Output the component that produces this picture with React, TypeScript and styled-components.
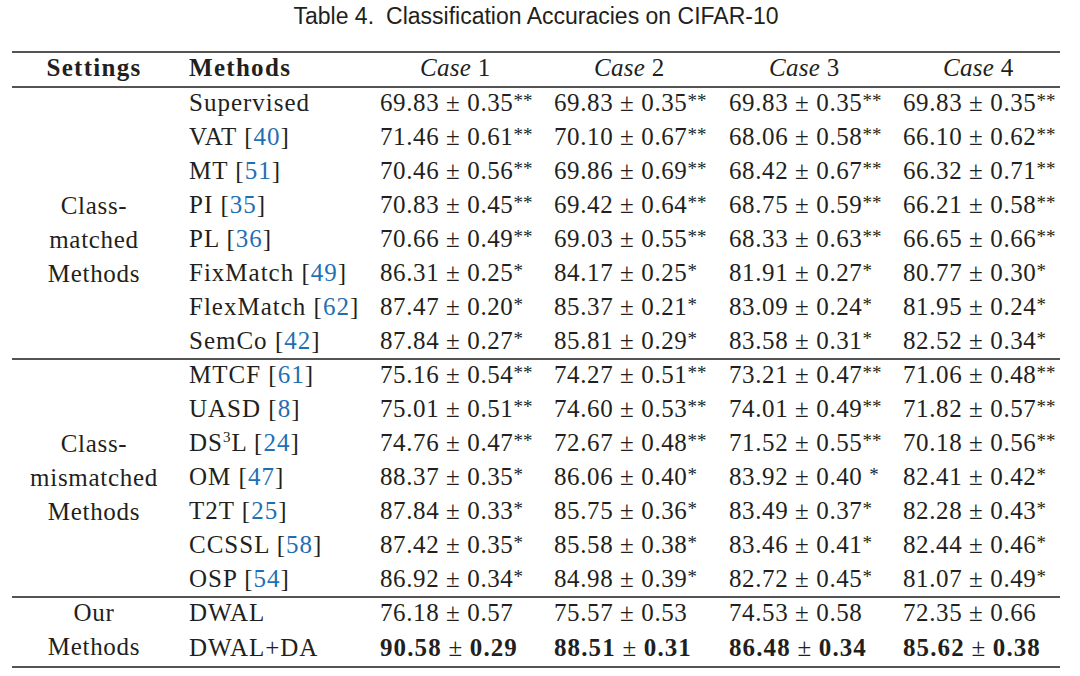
import React from 'react'
import styled, { createGlobalStyle } from 'styled-components'

const GlobalStyle = createGlobalStyle`
  html, body {
    margin: 0;
    padding: 0;
    background: #ffffff;
  }
  body {
    color: #231f20;
    font-family: "Liberation Serif", "Times New Roman", serif;
  }
`

const Page = styled.div`
  width: 1048px;
  padding: 0 20px 0 12px;
`

const Caption = styled.div`
  height: 51px;
  padding-top: 4px;
  box-sizing: border-box;
  text-align: center;
  font-family: "Liberation Sans", Arial, sans-serif;
  font-size: 23px;
  line-height: 24px;
  color: #231f20;

  span {
    margin-right: 12px;
  }
`

const Table = styled.table`
  width: 1048px;
  border-spacing: 0;
  table-layout: fixed;
  font-size: 25px;
  border-bottom: 2px solid #545454;
`

const HeadCell = styled.th<{ $align?: 'center' | 'left'; $pad?: number }>`
  height: 35px;
  padding: 0 0 0 ${p => p.$pad ?? 0}px;
  text-align: ${p => p.$align ?? 'left'};
  font-weight: normal;
  line-height: 33px;
  vertical-align: top;
  box-shadow: inset 0 2px 0 #545454;
  white-space: nowrap;
  letter-spacing: 0.3px;
`

const BoldHead = styled.strong`
  font-weight: bold;
  letter-spacing: 1.3px;
`

const Row = styled.tr<{ $rule?: boolean; $tall?: boolean }>`
  td {
    height: ${p => (p.$tall ? 35 : 34)}px;
    line-height: ${p => (p.$tall ? 34 : 33)}px;
    box-shadow: ${p => (p.$rule ? 'inset 0 2px 0 #545454' : 'none')};
  }
`

const SettingCell = styled.td<{ $skip: number }>`
  padding: ${p => p.$skip * 34 + (p.$skip ? 1 : 0)}px 0 0 0;
  text-align: center;
  vertical-align: top;
  letter-spacing: 0.7px;

  div {
    height: 34px;
    line-height: 33px;
  }
`

const MethodCell = styled.td`
  padding: 0 0 0 13px;
  vertical-align: top;
  white-space: nowrap;
  letter-spacing: 1px;
`

const ValueCell = styled.td`
  padding: 0 0 0 10px;
  vertical-align: top;
  white-space: nowrap;
  letter-spacing: 0.6px;
`

const Ref = styled.span`
  color: #1f6fb2;
`

const Stars = styled.sup`
  font-size: 19px;
  line-height: 0;
  vertical-align: 4px;
  letter-spacing: 0;
`

const Sup = styled.sup`
  font-size: 15px;
  line-height: 0;
  vertical-align: 9px;
`

const Bold = styled.b`
  font-weight: bold;
  letter-spacing: 1.1px;
`

type Val = [string, string, string?]

interface Method {
  name: React.ReactNode
  cite?: string
  vals: Val[]
  bold?: boolean
}

interface Group {
  label: string[]
  skip: number
  rows: Method[]
}

const s2 = (a: string, b: string): Val => [a, b, '**']
const s1 = (a: string, b: string): Val => [a, b, '*']

const groups: Group[] = [
  {
    label: ['Class-', 'matched', 'Methods'],
    skip: 3,
    rows: [
      { name: 'Supervised', vals: [s2('69.83', '0.35'), s2('69.83', '0.35'), s2('69.83', '0.35'), s2('69.83', '0.35')] },
      { name: 'VAT', cite: '40', vals: [s2('71.46', '0.61'), s2('70.10', '0.67'), s2('68.06', '0.58'), s2('66.10', '0.62')] },
      { name: 'MT', cite: '51', vals: [s2('70.46', '0.56'), s2('69.86', '0.69'), s2('68.42', '0.67'), s2('66.32', '0.71')] },
      { name: 'PI', cite: '35', vals: [s2('70.83', '0.45'), s2('69.42', '0.64'), s2('68.75', '0.59'), s2('66.21', '0.58')] },
      { name: 'PL', cite: '36', vals: [s2('70.66', '0.49'), s2('69.03', '0.55'), s2('68.33', '0.63'), s2('66.65', '0.66')] },
      { name: 'FixMatch', cite: '49', vals: [s1('86.31', '0.25'), s1('84.17', '0.25'), s1('81.91', '0.27'), s1('80.77', '0.30')] },
      { name: 'FlexMatch', cite: '62', vals: [s1('87.47', '0.20'), s1('85.37', '0.21'), s1('83.09', '0.24'), s1('81.95', '0.24')] },
      { name: 'SemCo', cite: '42', vals: [s1('87.84', '0.27'), s1('85.81', '0.29'), s1('83.58', '0.31'), s1('82.52', '0.34')] },
    ],
  },
  {
    label: ['Class-', 'mismatched', 'Methods'],
    skip: 2,
    rows: [
      { name: 'MTCF', cite: '61', vals: [s2('75.16', '0.54'), s2('74.27', '0.51'), s2('73.21', '0.47'), s2('71.06', '0.48')] },
      { name: 'UASD', cite: '8', vals: [s2('75.01', '0.51'), s2('74.60', '0.53'), s2('74.01', '0.49'), s2('71.82', '0.57')] },
      {
        name: (
          <>
            DS<Sup>3</Sup>L
          </>
        ),
        cite: '24',
        vals: [s2('74.76', '0.47'), s2('72.67', '0.48'), s2('71.52', '0.55'), s2('70.18', '0.56')],
      },
      { name: 'OM', cite: '47', vals: [s1('88.37', '0.35'), s1('86.06', '0.40'), ['83.92', '0.40', ' *'], s1('82.41', '0.42')] },
      { name: 'T2T', cite: '25', vals: [s1('87.84', '0.33'), s1('85.75', '0.36'), s1('83.49', '0.37'), s1('82.28', '0.43')] },
      { name: 'CCSSL', cite: '58', vals: [s1('87.42', '0.35'), s1('85.58', '0.38'), s1('83.46', '0.41'), s1('82.44', '0.46')] },
      { name: 'OSP', cite: '54', vals: [s1('86.92', '0.34'), s1('84.98', '0.39'), s1('82.72', '0.45'), s1('81.07', '0.49')] },
    ],
  },
  {
    label: ['Our', 'Methods'],
    skip: 0,
    rows: [
      { name: 'DWAL', vals: [['76.18', '0.57'], ['75.57', '0.53'], ['74.53', '0.58'], ['72.35', '0.66']] },
      { name: 'DWAL+DA', bold: true, vals: [['90.58', '0.29'], ['88.51', '0.31'], ['86.48', '0.34'], ['85.62', '0.38']] },
    ],
  },
]

function Value({ v, bold }: { v: Val; bold?: boolean }) {
  const [mean, std, stars] = v
  const gap = stars?.startsWith(' ')
  return (
    <>
      {bold ? <Bold>{mean}</Bold> : mean} ± {bold ? <Bold>{std}</Bold> : std}
      {stars && (
        <>
          {gap && ' '}
          <Stars>{stars.trim()}</Stars>
        </>
      )}
    </>
  )
}

export default function App() {
  return (
    <Page>
      <GlobalStyle />
      <Caption>
        <span>Table 4.</span>Classification Accuracies on CIFAR-10
      </Caption>
      <Table>
        <colgroup>
          <col style={{ width: 164 }} />
          <col style={{ width: 194 }} />
          <col style={{ width: 174 }} />
          <col style={{ width: 175 }} />
          <col style={{ width: 174 }} />
          <col style={{ width: 167 }} />
        </colgroup>
        <thead>
          <tr>
            <HeadCell $align="center">
              <BoldHead>Settings</BoldHead>
            </HeadCell>
            <HeadCell $pad={13}>
              <BoldHead>Methods</BoldHead>
            </HeadCell>
            {[1, 2, 3, 4].map(n => (
              <HeadCell key={n} $pad={50}>
                <i>Case</i> {n}
              </HeadCell>
            ))}
          </tr>
        </thead>
        <tbody>
          {groups.map((g, gi) =>
            g.rows.map((m, ri) => (
              <Row key={`${gi}-${ri}`} $rule={ri === 0} $tall={gi === groups.length - 1}>
                {ri === 0 && (
                  <SettingCell rowSpan={g.rows.length} $skip={g.skip}>
                    {g.label.map(l => (
                      <div key={l}>{l}</div>
                    ))}
                  </SettingCell>
                )}
                <MethodCell>
                  {m.name}
                  {m.cite && (
                    <>
                      {' '}[<Ref>{m.cite}</Ref>]
                    </>
                  )}
                </MethodCell>
                {m.vals.map((v, vi) => (
                  <ValueCell key={vi}>
                    <Value v={v} bold={m.bold} />
                  </ValueCell>
                ))}
              </Row>
            ))
          )}
        </tbody>
      </Table>
    </Page>
  )
}
